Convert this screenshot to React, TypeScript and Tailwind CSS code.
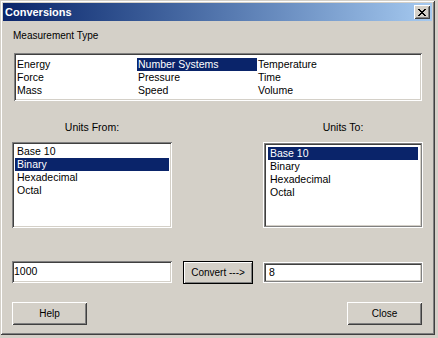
import React from "react";

const SUNKEN =
  "shadow-[inset_1px_1px_0_#808080,inset_-1px_-1px_0_#ffffff,inset_2px_2px_0_#404040,inset_-2px_-2px_0_#d4d0c8]";
const FRAMED =
  "shadow-[inset_1px_1px_0_#ffffff,inset_-1px_-1px_0_#ffffff,inset_2px_2px_0_#808080,inset_-2px_-2px_0_#808080,inset_3px_3px_0_#404040,inset_-3px_-3px_0_#d4d0c8]";
const RAISED =
  "shadow-[inset_1px_1px_0_#ffffff,inset_-1px_-1px_0_#404040,inset_2px_2px_0_#d4d0c8,inset_-2px_-2px_0_#808080]";

const font = { fontFamily: '"Liberation Sans", Arial, sans-serif' };

function CloseGlyph() {
  const rows = [
    "XX....XX",
    ".XX..XX.",
    "..XXXX..",
    "...XX...",
    "..XXXX..",
    ".XX..XX.",
    "XX....XX",
  ];
  const rects: React.ReactNode[] = [];
  rows.forEach((r, y) =>
    r.split("").forEach((c, x) => {
      if (c === "X") rects.push(<rect key={`${x}-${y}`} x={x} y={y} width={1} height={1} fill="#000" />);
    })
  );
  return (
    <svg width="8" height="7" viewBox="0 0 8 7" shapeRendering="crispEdges">
      {rects}
    </svg>
  );
}

function ListItem({ text, selected }: { text: string; selected?: boolean }) {
  return (
    <div
      className={`h-[13px] leading-[13px] pl-[2px] whitespace-nowrap ${
        selected ? "bg-[#0a246a] text-white" : "text-black"
      }`}
    >
      {text}
    </div>
  );
}

export default function App() {
  const units = ["Base 10", "Binary", "Hexadecimal", "Octal"];
  const measure = [
    ["Energy", "Number Systems", "Temperature"],
    ["Force", "Pressure", "Time"],
    ["Mass", "Speed", "Volume"],
  ];
  return (
    <div className="w-[438px] h-[338px] bg-[#d4d0c8] text-black" style={font}>
      <div
        className={`w-[435px] h-[335px] bg-[#d4d0c8] p-[3px] flex flex-col shadow-[inset_1px_1px_0_#d4d0c8,inset_-1px_-1px_0_#404040,inset_2px_2px_0_#ffffff,inset_-2px_-2px_0_#808080]`}
      >
        {/* Title bar */}
        <div className="h-[18px] flex items-center justify-between bg-gradient-to-r from-[#0a246a] to-[#a6caf0] pl-[2px] pr-[2px]">
          <span className="text-white font-bold text-[11px] leading-[18px]">Conversions</span>
          <div className={`w-[16px] h-[14px] bg-[#d4d0c8] flex items-center justify-center ${RAISED}`}>
            <CloseGlyph />
          </div>
        </div>

        {/* Body */}
        <div className="flex flex-col">
          <div className="ml-[10px] mt-[8px] h-[13px] text-[10px] leading-[13px]">Measurement Type</div>

          <div className={`ml-[11px] mt-[11px] w-[408px] h-[48px] bg-white pt-[5px] pl-[2px] pr-[2px] ${SUNKEN}`}>
            {measure.map((row, i) => (
              <div key={i} className="grid grid-cols-[121px_120px_1fr] text-[10.5px]">
                {row.map((t) => (
                  <div
                    key={t}
                    className={`h-[13px] leading-[13px] pl-[1px] whitespace-nowrap ${
                      t === "Number Systems" ? "bg-[#0a246a] text-white" : ""
                    }`}
                  >
                    {t}
                  </div>
                ))}
              </div>
            ))}
          </div>

          {/* Units lists */}
          <div className="ml-[9px] mt-[20px] w-[411px] flex justify-between">
            <div className="w-[160px] flex flex-col items-center">
              <div className="h-[13px] leading-[13px] text-[10.5px]">Units From:</div>
              <div className={`mt-[8px] w-[160px] h-[86px] bg-white p-[3px] text-[10.5px] ${SUNKEN}`}>
                {units.map((u) => (
                  <ListItem key={u} text={u} selected={u === "Binary"} />
                ))}
              </div>
            </div>
            <div className="w-[160px] flex flex-col items-center">
              <div className="h-[13px] leading-[13px] text-[10.5px]">Units To:</div>
              <div className={`mt-[8px] w-[160px] h-[86px] bg-white p-[5px] text-[10.5px] ${FRAMED}`}>
                {units.map((u) => (
                  <ListItem key={u} text={u} selected={u === "Base 10"} />
                ))}
              </div>
            </div>
          </div>

          {/* Input row */}
          <div className="ml-[9px] mt-[33px] flex items-start text-[10.5px]">
            <div className={`w-[160px] h-[22px] bg-white pl-[2px] flex items-center ${SUNKEN}`}>1000</div>
            <div
              className={`ml-[11px] w-[70px] h-[23px] bg-[#d4d0c8] border border-black flex items-center justify-center text-[10px] shadow-[inset_1px_1px_0_#ffffff,inset_-1px_-1px_0_#808080]`}
            >
              Convert ---&gt;
            </div>
            <div className={`ml-[10px] mt-[1px] w-[160px] h-[21px] bg-white pl-[6px] flex items-center ${FRAMED}`}>8</div>
          </div>

          {/* Buttons */}
          <div className="ml-[9px] mt-[18px] w-[410px] flex justify-between text-[10px]">
            <div className={`w-[75px] h-[23px] flex items-center justify-center ${RAISED}`}>Help</div>
            <div className={`w-[75px] h-[23px] flex items-center justify-center ${RAISED}`}>Close</div>
          </div>
        </div>
      </div>
    </div>
  );
}
